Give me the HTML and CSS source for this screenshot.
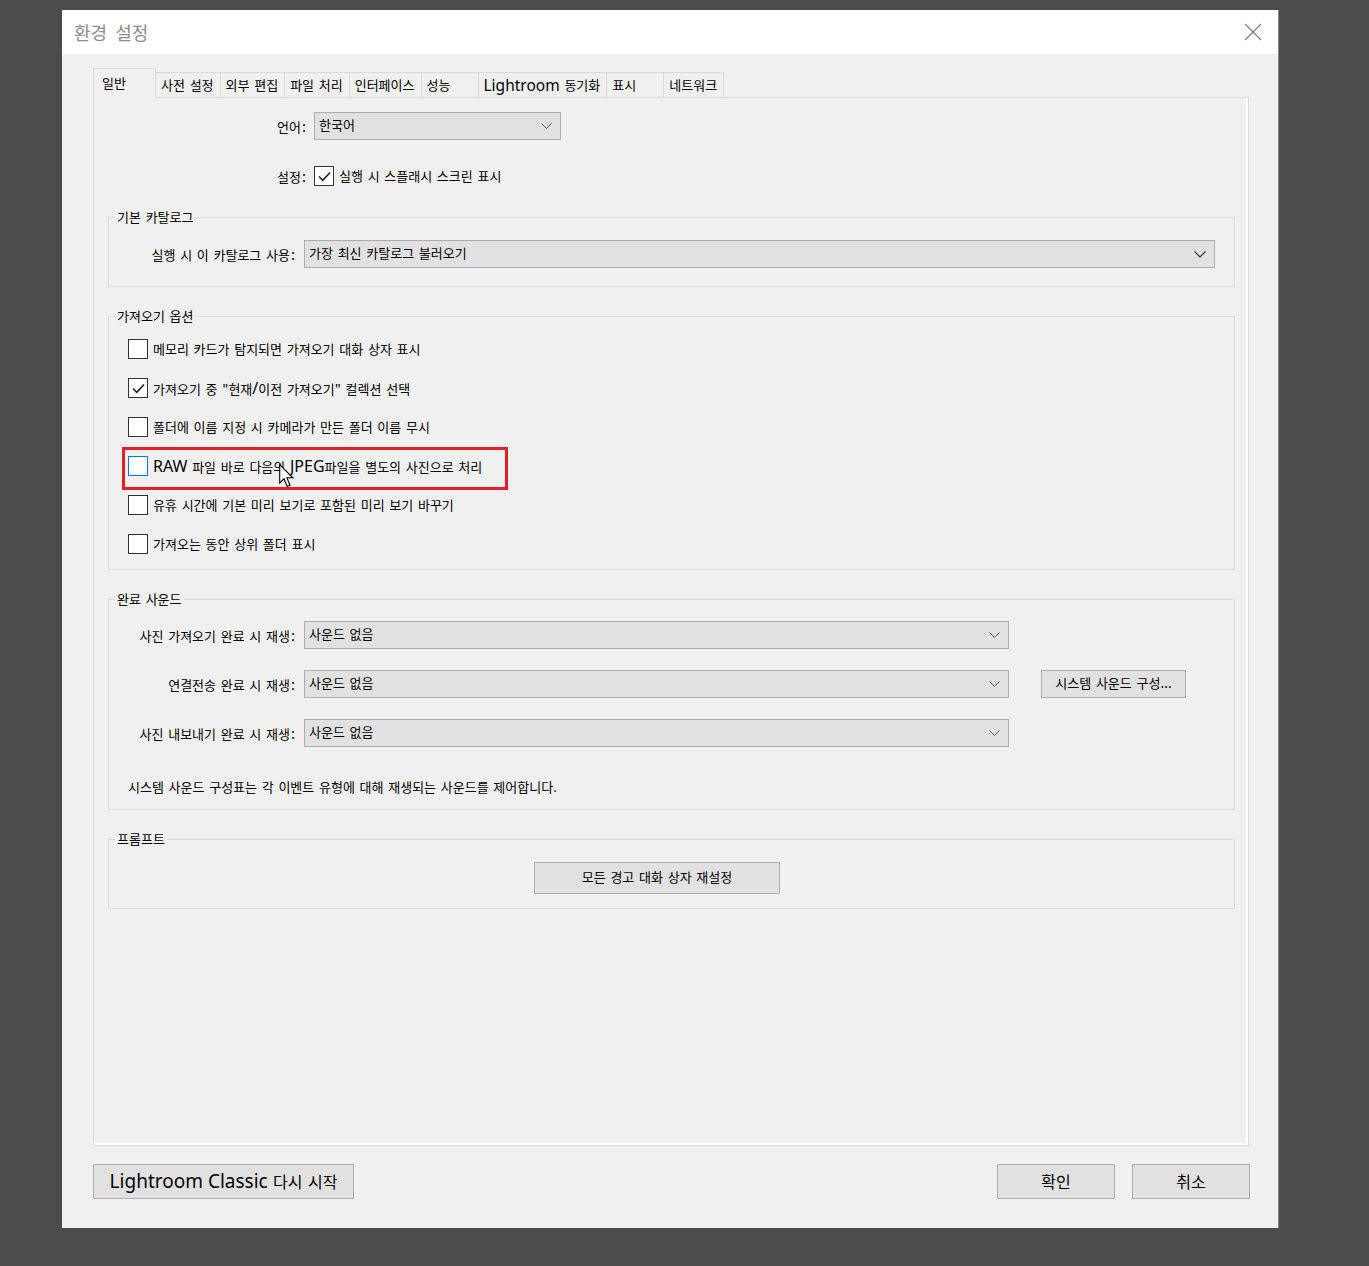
FILE: index.html
```html
<!DOCTYPE html>
<html>
<head>
<meta charset="UTF-8">
<title>환경 설정</title>
<link rel="stylesheet" href="styles.css">
</head>
<body>
<div class="dialog">
    <div class="titlebar">
        <span class="title">환경 설정</span>
        <svg class="close" width="18" height="18" viewBox="0 0 18 18">
            <path d="M1 1 L17 17 M17 1 L1 17" stroke="#7a7a7a" stroke-width="1.1" fill="none"/>
        </svg>
    </div>
    <div class="content">
        <div class="tabs">
            <div class="tab selected">일반</div>
            <div class="tab">사전 설정</div>
            <div class="tab">외부 편집</div>
            <div class="tab">파일 처리</div>
            <div class="tab">인터페이스</div>
            <div class="tab">성능</div>
            <div class="tab"><span class="latin lr">Lightroom</span>&nbsp;동기화</div>
            <div class="tab">표시</div>
            <div class="tab">네트워크</div>
        </div>
        <div class="panel">
            <div class="general">
                <div class="row">
                    <span class="label">언어<span class="colon">:</span></span>
                    <div class="select lang">
                        <span>한국어</span>
                        <svg class="chev" width="11" height="7" viewBox="0 0 11 7"><path d="M0.5 0.5 L5.5 5.5 L10.5 0.5" stroke="#555" fill="none"/></svg>
                    </div>
                </div>
                <div class="row setting">
                    <span class="label">설정<span class="colon">:</span></span>
                    <div class="check">
                        <span class="box"><svg width="17" height="17" viewBox="0 0 17 17"><path d="M3 8.5 L6.8 12.3 L14 4.5" stroke="#222" stroke-width="1.6" fill="none"/></svg></span>
                        <span>실행 시 스플래시 스크린 표시</span>
                    </div>
                </div>
            </div>

            <fieldset class="group catalog">
                <legend>기본 카탈로그</legend>
                <div class="grid">
                    <span class="label">실행 시 이 카탈로그 사용<span class="colon">:</span></span>
                    <div class="select wide">
                        <span>가장 최신 카탈로그 불러오기</span>
                        <svg class="chev" width="12" height="7" viewBox="0 0 12 7"><path d="M0.5 0.5 L6 6 L11.5 0.5" stroke="#333" stroke-width="1.2" fill="none"/></svg>
                    </div>
                </div>
            </fieldset>

            <fieldset class="group import">
                <legend>가져오기 옵션</legend>
                <div class="checklist">
                    <div class="check"><span class="box"></span><span>메모리 카드가 탐지되면 가져오기 대화 상자 표시</span></div>
                    <div class="check"><span class="box"><svg width="17" height="17" viewBox="0 0 17 17"><path d="M3 8.5 L6.8 12.3 L14 4.5" stroke="#222" stroke-width="1.6" fill="none"/></svg></span><span>가져오기 중 "현재<span class="latin slash">/</span>이전 가져오기" 컬렉션 선택</span></div>
                    <div class="check"><span class="box"></span><span>폴더에 이름 지정 시 카메라가 만든 폴더 이름 무시</span></div>
                    <div class="check marked">
                        <span class="box hover"></span>
                        <span><span class="latin big">RAW</span> 파일 바로 다음의 <span class="latin big">JPEG</span>파일을 별도의 사진으로 처리</span>
                        <span class="highlight"></span>
                        <svg class="cursor" width="16" height="24" viewBox="0 0 16 24">
                            <path d="M0.7 0.7 L0.7 19 L5 14.8 L8.2 22.5 L11 21.3 L7.9 13.8 L13.8 13.8 Z" fill="#fff" stroke="#000" stroke-width="1.1" stroke-linejoin="miter"/>
                        </svg>
                    </div>
                    <div class="check"><span class="box"></span><span>유휴 시간에 기본 미리 보기로 포함된 미리 보기 바꾸기</span></div>
                    <div class="check"><span class="box"></span><span>가져오는 동안 상위 폴더 표시</span></div>
                </div>
            </fieldset>

            <fieldset class="group sound">
                <legend>완료 사운드</legend>
                <div class="grid sound-grid">
                    <span class="label">사진 가져오기 완료 시 재생<span class="colon">:</span></span>
                    <div class="select mid">
                        <span>사운드 없음</span>
                        <svg class="chev" width="11" height="7" viewBox="0 0 11 7"><path d="M0.5 0.5 L5.5 5.5 L10.5 0.5" stroke="#555" fill="none"/></svg>
                    </div>
                    <span></span>

                    <span class="label">연결전송 완료 시 재생<span class="colon">:</span></span>
                    <div class="select mid">
                        <span>사운드 없음</span>
                        <svg class="chev" width="11" height="7" viewBox="0 0 11 7"><path d="M0.5 0.5 L5.5 5.5 L10.5 0.5" stroke="#555" fill="none"/></svg>
                    </div>
                    <div class="button sys">시스템 사운드 구성<span class="latin dots">...</span></div>

                    <span class="label">사진 내보내기 완료 시 재생<span class="colon">:</span></span>
                    <div class="select mid">
                        <span>사운드 없음</span>
                        <svg class="chev" width="11" height="7" viewBox="0 0 11 7"><path d="M0.5 0.5 L5.5 5.5 L10.5 0.5" stroke="#555" fill="none"/></svg>
                    </div>
                    <span></span>
                </div>
                <p class="note">시스템 사운드 구성표는 각 이벤트 유형에 대해 재생되는 사운드를 제어합니다.</p>
            </fieldset>

            <fieldset class="group prompt">
                <legend>프롬프트</legend>
                <div class="prompt-body">
                    <div class="button reset">모든 경고 대화 상자 재설정</div>
                </div>
            </fieldset>
        </div>

        <div class="footer">
            <div class="button big-btn restart"><span class="latin lrc">Lightroom Classic</span>&nbsp;다시 시작</div>
            <div class="actions">
                <div class="button big-btn action">확인</div>
                <div class="button big-btn action">취소</div>
            </div>
        </div>
    </div>
</div>
</body>
</html>
```

FILE: styles.css
```css
body {
    margin: 0;
    background: #4b4b4b;
    font-family: "Noto Sans CJK KR", sans-serif;
    font-size: 13px;
    line-height: 16px;
    color: #000;
    word-spacing: 1.8px;
}
.latin {
    font-family: "Noto Sans", "Noto Sans CJK KR", sans-serif;
    word-spacing: 0;
}
.dialog {
    margin: 10px 0 0 62px;
    width: 1216px;
    height: 1218px;
    background: #f0f0f0;
    display: flex;
    flex-direction: column;
    box-shadow: 1px 0 0 #8a8a8a;
}
.titlebar {
    height: 44px;
    background: #fff;
    display: flex;
    align-items: center;
    justify-content: space-between;
    padding: 0 16px 0 12px;
    flex: none;
}
.title {
    font-size: 18px;
    line-height: 22px;
    color: #8c8c8c;
    word-spacing: 4px;
}
.content {
    padding: 14px 29px 0 31px;
    display: flex;
    flex-direction: column;
}

/* tabs */
.tabs {
    display: flex;
    align-items: flex-end;
    height: 29px;
}
.tab {
    box-sizing: border-box;
    height: 25px;
    min-width: 58px;
    padding: 0 6px 0 5px;
    border: 1px solid #d9d9d9;
    border-bottom: none;
    margin-left: -1px;
    display: flex;
    align-items: center;
    white-space: nowrap;
}
.tab.selected {
    height: 30px;
    min-width: 63px;
    margin-left: 0;
    margin-bottom: -1px;
    padding-left: 8px;
    padding-bottom: 2px;
    background: #f0f0f0;
    position: relative;
    z-index: 1;
}
.tab .lr {
    font-size: 15.5px;
}

.panel {
    box-sizing: border-box;
    height: 1049px;
    border: 1px solid #d9d9d9;
    box-shadow: inset -2px -2px 0 #fff;
    padding: 14px 13px 0 14px;
}

/* general rows */
.general .row {
    display: grid;
    grid-template-columns: 198px auto;
    column-gap: 8px;
    align-items: center;
}
.general .row.setting {
    margin-top: 26px;
}
.label {
    text-align: right;
    white-space: nowrap;
}
.colon {
    font-family: "Noto Sans", sans-serif;
    font-size: 15px;
    margin-left: 1px;
}

.select {
    box-sizing: border-box;
    height: 28px;
    background: #e1e1e1;
    border: 1px solid #adadad;
    display: flex;
    align-items: center;
    justify-content: space-between;
    padding: 0 8px 2px 4px;
}
.select .chev {
    margin-top: 2px;
}
.select.lang {
    width: 247px;
}
.select.wide {
    margin-right: 19px;
}
.select.mid {
    width: 705px;
}

.check {
    display: flex;
    align-items: center;
    gap: 5px;
    position: relative;
}
.box {
    box-sizing: border-box;
    width: 20px;
    height: 20px;
    border: 1px solid #333;
    background: #fff;
    display: flex;
    align-items: center;
    justify-content: center;
    flex: none;
}
.box.hover {
    border-color: #0078d7;
}

/* group boxes */
.group {
    margin: 0;
    padding: 0;
    border: 1px solid #d9d9d9;
    min-width: 0;
}
.group legend {
    margin-left: 6px;
    padding: 0 2px;
    line-height: 16px;
}
.catalog {
    margin-top: 23px;
    padding: 15px 0 18px;
}
.grid {
    display: grid;
    grid-template-columns: 186px 1fr;
    column-gap: 9px;
    align-items: center;
}
.import {
    margin-top: 21px;
    padding: 15px 0 15px;
}
.checklist {
    display: flex;
    flex-direction: column;
    gap: 19px;
    padding-left: 19px;
}
.highlight {
    position: absolute;
    left: -6px;
    top: -9px;
    width: 386px;
    height: 43px;
    box-sizing: border-box;
    border: 3px solid #e0202a;
}
.cursor {
    position: absolute;
    left: 151px;
    top: 8px;
}
.big {
    font-size: 16px;
}
.slash {
    font-size: 16px;
}

.sound {
    margin-top: 21px;
    padding: 14px 0 14px;
}
.sound-grid {
    grid-template-columns: 186px 705px auto;
    row-gap: 21px;
}
.sound-grid .sys {
    margin-left: 23px;
    width: 145px;
}
.note {
    margin: 32px 0 0 19px;
}

.prompt {
    margin-top: 21px;
    padding: 15px 0 14px;
}
.prompt-body {
    padding-left: 425px;
}

.button {
    box-sizing: border-box;
    background: #e1e1e1;
    border: 1px solid #adadad;
    display: flex;
    align-items: center;
    justify-content: center;
    white-space: nowrap;
}
.button.sys {
    height: 28px;
    padding-bottom: 2px;
}
.button.reset {
    width: 246px;
    height: 32px;
    padding-bottom: 2px;
}
.dots {
    font-size: 14px;
}

/* footer */
.footer {
    margin-top: 18px;
    display: flex;
    justify-content: space-between;
    margin-right: -1px;
}
.big-btn {
    height: 35px;
    font-size: 16px;
    padding-bottom: 2px;
}
.restart {
    width: 261px;
}
.lrc {
    font-size: 19px;
}
.actions {
    display: flex;
    gap: 17px;
}
.action {
    width: 118px;
}
```
